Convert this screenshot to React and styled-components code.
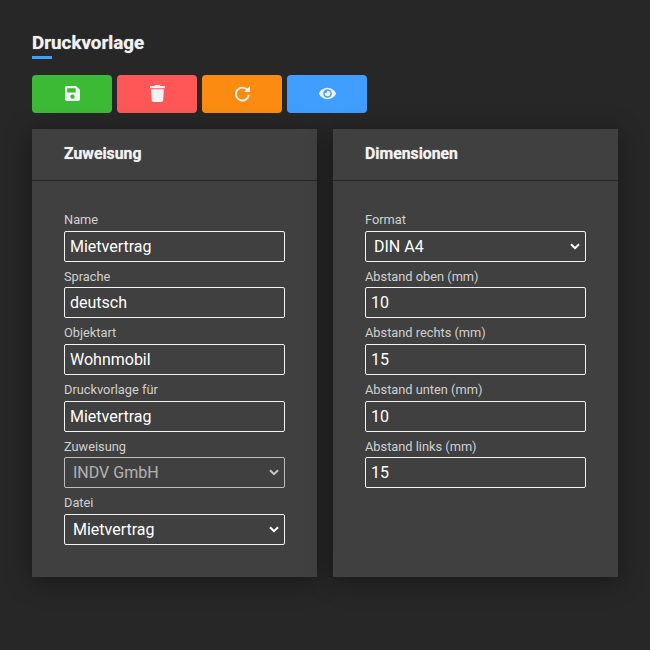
import { createGlobalStyle } from "styled-components";
import styled from "styled-components";
import { FaSave, FaTrash, FaEye } from "react-icons/fa";

const GlobalStyle = createGlobalStyle`
  html, body {
    margin: 0;
    height: 100%;
    background: #272727;
  }
  body {
    font-family: Roboto, "Liberation Sans", sans-serif;
  }
`;

const Page = styled.div`
  width: 650px;
  height: 650px;
  box-sizing: border-box;
  padding: 32px;
  background: #272727;
`;

const Title = styled.h1`
  position: relative;
  margin: 0 0 16px;
  height: 27px;
  font-size: 18.8px;
  line-height: 22px;
  font-weight: 700;
  color: #f1f1f1;
  text-shadow: 0 0 1px rgba(241, 241, 241, 0.7);
  &::after {
    content: "";
    position: absolute;
    left: 0;
    bottom: 0;
    width: 20px;
    height: 3px;
    background: #409eff;
  }
`;

const Toolbar = styled.div`
  display: flex;
  gap: 5px;
  margin-bottom: 16px;
`;

const ActionButton = styled.button`
  width: 80px;
  height: 38px;
  padding: 0 0 1px;
  border: none;
  border-radius: 4px;
  background: ${(props) => props.$color};
  color: #f2f2f2;
  display: flex;
  align-items: center;
  justify-content: center;
  font-size: ${(props) => props.$size}px;
`;

const Columns = styled.div`
  display: flex;
  gap: 16px;
`;

const Card = styled.section`
  width: 285px;
  height: 448px;
  background: #404040;
  box-shadow: 0 4px 24px rgba(0, 0, 0, 0.38);
`;

const CardHeader = styled.h2`
  margin: 0;
  height: 51px;
  padding-left: 32px;
  border-bottom: 1px solid #272727;
  font-size: 15.8px;
  line-height: 50px;
  font-weight: 700;
  color: #f1f1f1;
  text-shadow: 0 0 1px rgba(241, 241, 241, 0.7);
`;

const CardBody = styled.div`
  padding: 31px 32px 0;
`;

const Field = styled.label`
  display: block;
  margin-bottom: 6.97px;
`;

const FieldLabel = styled.span`
  display: block;
  font-size: 12.8px;
  line-height: 15.36px;
  margin-bottom: 3.34px;
  color: #d0d0d0;
`;

const TextInput = styled.input`
  display: block;
  width: 100%;
  height: 31px;
  box-sizing: border-box;
  padding: 0 5px;
  background: transparent;
  border: 1px solid #f2f2f2;
  border-radius: 2px;
  outline: none;
  font-family: Roboto, sans-serif;
  font-size: 16px;
  color: #fff;
`;

const chevron =
  "url(\"data:image/svg+xml,%3Csvg xmlns='http://www.w3.org/2000/svg' width='10' height='7' viewBox='0 0 10 7'%3E%3Cpath d='M1 1.2l4 4 4-4' fill='none' stroke='%23fff' stroke-width='2'/%3E%3C/svg%3E\")";

const Select = styled.select`
  display: block;
  width: 100%;
  height: 31px;
  box-sizing: border-box;
  padding: 0 24px 0 8px;
  appearance: none;
  background: transparent ${chevron} no-repeat right 5px center;
  border: 1px solid #f2f2f2;
  border-radius: 2px;
  outline: none;
  font-family: Roboto, sans-serif;
  font-size: 16px;
  color: #fff;
  &:disabled {
    opacity: 0.7;
    color: #e0e0e0;
  }
  option {
    background: #404040;
  }
`;

const RedoIcon = () => (
  <svg width="17" height="17" viewBox="0 0 16 16" fill="none">
    <path d="M12.6 4.6A6.1 6.1 0 1 0 14 9.2" stroke="currentColor" strokeWidth="1.8" />
    <path d="M15 1v5.6H9.4z" fill="currentColor" />
  </svg>
);

const actions = [
  { color: "#3cba35", Icon: FaSave, size: 17 },
  { color: "#ff5757", Icon: FaTrash, size: 17 },
  { color: "#fb8c11", Icon: RedoIcon, size: 16 },
  { color: "#409eff", Icon: FaEye, size: 17 },
];

const assignment = [
  { label: "Name", value: "Mietvertrag" },
  { label: "Sprache", value: "deutsch" },
  { label: "Objektart", value: "Wohnmobil" },
  { label: "Druckvorlage für", value: "Mietvertrag" },
  { label: "Zuweisung", value: "INDV GmbH", select: true, disabled: true },
  { label: "Datei", value: "Mietvertrag", select: true },
];

const dimensions = [
  { label: "Format", value: "DIN A4", select: true },
  { label: "Abstand oben (mm)", value: "10" },
  { label: "Abstand rechts (mm)", value: "15" },
  { label: "Abstand unten (mm)", value: "10" },
  { label: "Abstand links (mm)", value: "15" },
];

function FormField({ label, value, select, disabled }) {
  return (
    <Field>
      <FieldLabel>{label}</FieldLabel>
      {select ? (
        <Select defaultValue={value} disabled={disabled}>
          <option>{value}</option>
        </Select>
      ) : (
        <TextInput defaultValue={value} />
      )}
    </Field>
  );
}

export default function App() {
  return (
    <Page>
      <GlobalStyle />
      <Title>Druckvorlage</Title>
      <Toolbar>
        {actions.map(({ color, Icon, size }, index) => (
          <ActionButton key={index} $color={color} $size={size}>
            <Icon />
          </ActionButton>
        ))}
      </Toolbar>
      <Columns>
        <Card>
          <CardHeader>Zuweisung</CardHeader>
          <CardBody>
            {assignment.map((field) => (
              <FormField key={field.label} {...field} />
            ))}
          </CardBody>
        </Card>
        <Card>
          <CardHeader>Dimensionen</CardHeader>
          <CardBody>
            {dimensions.map((field) => (
              <FormField key={field.label} {...field} />
            ))}
          </CardBody>
        </Card>
      </Columns>
    </Page>
  );
}
